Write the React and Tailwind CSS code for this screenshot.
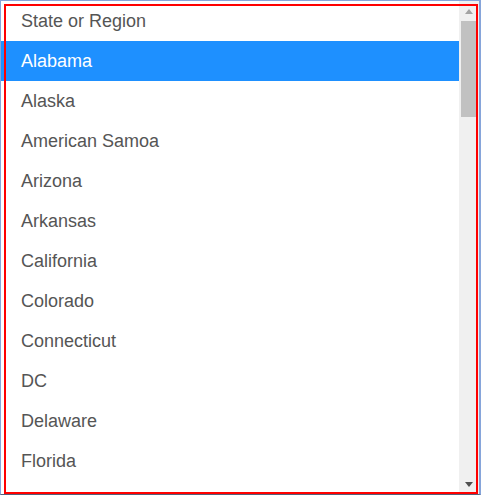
const states = [
  "State or Region",
  "Alabama",
  "Alaska",
  "American Samoa",
  "Arizona",
  "Arkansas",
  "California",
  "Colorado",
  "Connecticut",
  "DC",
  "Delaware",
  "Florida",
  "Georgia",
];

export default function App() {
  const selected = "Alabama";

  return (
    <div className="w-[482px] h-[497px] bg-white" style={{ fontFamily: '"Liberation Sans", Arial, sans-serif' }}>
      <div className="relative w-[481px] h-[495px] border border-r-2 border-[#86a5da] border-b-[#55607a] flex overflow-hidden">
        {/* option list */}
        <div className="flex-1 flex flex-col overflow-hidden">
          {states.map((s) => (
            <div
              key={s}
              className={
                s === selected
                  ? "h-10 shrink-0 flex items-center pl-5 pt-px text-[18px] bg-[#1e90ff] text-white"
                  : "h-10 shrink-0 flex items-center pl-5 pt-px text-[18px] text-[#555555]"
              }
            >
              {s}
            </div>
          ))}
        </div>

        {/* scrollbar */}
        <div className="w-[20px] shrink-0 bg-[#f0f0f0] flex flex-col items-start">
          <div className="h-[20px] w-full flex items-center justify-center">
            <svg width="8" height="5" viewBox="0 0 8 5">
              <path d="M4 0 L8 5 L0 5 Z" fill="#a3a3a3" />
            </svg>
          </div>
          <div className="ml-[2px] w-[15px] h-[96px] bg-[#c1c1c1]" />
          <div className="flex-1" />
          <div className="h-[20px] w-full flex items-center justify-center">
            <svg width="8" height="5" viewBox="0 0 8 5">
              <path d="M0 0 L8 0 L4 5 Z" fill="#505050" />
            </svg>
          </div>
        </div>

        {/* focus outline */}
        <div className="absolute left-[3px] top-[3px] right-[1px] bottom-0 border-2 border-[#ff0000] pointer-events-none" />
      </div>
    </div>
  );
}
